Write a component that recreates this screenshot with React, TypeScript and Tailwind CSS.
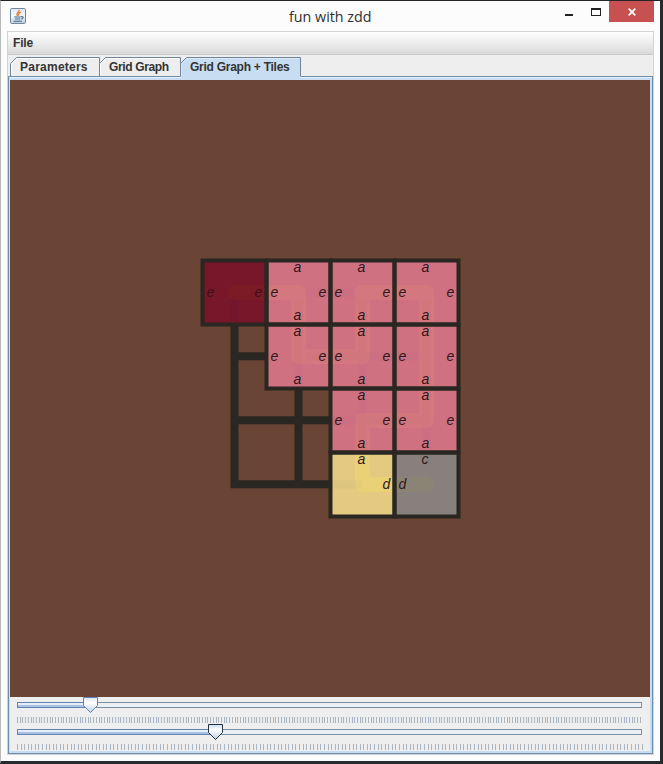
import React from "react";

type Tile = { col: number; row: number; fill: string; n?: string; w?: string; e?: string; s?: string };

const PINK = "#d07182";
const LINE = "#2a2621";

const pink = (col: number, row: number): Tile => ({ col, row, fill: PINK, n: "a", w: "e", e: "e", s: "a" });

const tiles: Tile[] = [
  { col: 0, row: 0, fill: "#781729", w: "e", e: "e" },
  pink(1, 0),
  pink(2, 0),
  pink(3, 0),
  pink(1, 1),
  pink(2, 1),
  pink(3, 1),
  pink(2, 2),
  pink(3, 2),
  { col: 2, row: 3, fill: "#e4ca80", n: "a", e: "d" },
  { col: 3, row: 3, fill: "#87807c", n: "c", w: "d" },
];

// Rounded bars of the tour; each one spans two neighbouring nodes.
const PINK_TOUR = "M266 292.5H298.5V356.5H362.5V292.5H426.5V420.5H362.5V452";

function Board() {
  return (
    <svg
      width="640"
      height="617"
      viewBox="10 80 640 617"
      className="block font-['Liberation_Sans',Arial,sans-serif] text-[14px] italic"
    >
      <path d="M234.5 292V488M298.5 292V484M231 356.2H426M231 420.2H426M230.5 484.2H362" stroke={LINE} strokeWidth="8" fill="none" />
      {tiles.map((t) => (
        <rect key={`${t.col}-${t.row}`} x={202.5 + t.col * 64} y={260.5 + t.row * 64} width="64" height="64" fill={t.fill} />
      ))}
      <path
        d="M298.5 300V386M362.5 300V452M426.5 300V452M306 292.5H354M306 356.5H422M332 420.5H422"
        stroke="#b8558a"
        strokeOpacity="0.08"
        strokeWidth="8"
        fill="none"
      />
      <path d="M234.5 298V322" stroke="#6a1434" strokeOpacity="0.4" strokeWidth="8" fill="none" />
      <path d="M332 484.5H362M426.5 455V484" stroke="#8a7c70" strokeOpacity="0.07" strokeWidth="8" fill="none" />
      <path d="M266.5 285H234.5a7.5 7.5 0 0 0 0 15H266.5Z" fill="#8a2820" fillOpacity="0.28" />
      <path d={PINK_TOUR} stroke="#ee9a68" strokeOpacity="0.16" strokeWidth="15" strokeLinejoin="round" fill="none" />
      <path d="M362.5 453V484.5H394" stroke="#f6dc66" strokeOpacity="0.34" strokeWidth="15" strokeLinejoin="round" fill="none" />
      <path d="M396 477H426.5a7.5 7.5 0 0 1 0 15H396Z" fill="#948a68" fillOpacity="0.32" />
      {tiles.map((t) => {
        const x = 202.5 + t.col * 64;
        const y = 260.5 + t.row * 64;
        const ink = t.col === 0 ? "#3f1018" : "#30171b";
        return (
          <g key={`${t.col}-${t.row}`} fill={ink}>
            <rect x={x} y={y} width="64" height="64" fill="none" stroke={LINE} strokeWidth="4" />
            {t.n && <text x={x + 27} y={y + 11.5}>{t.n}</text>}
            {t.w && <text x={x + 4} y={y + 36.5}>{t.w}</text>}
            {t.e && <text x={x + 52} y={y + 36.5}>{t.e}</text>}
            {t.s && <text x={x + 27} y={y + 59.5}>{t.s}</text>}
          </g>
        );
      })}
    </svg>
  );
}

function JavaIcon() {
  return (
    <svg width="16" height="16" viewBox="0 0 16 16" fill="none">
      <defs>
        <linearGradient id="cup" x1="0" y1="0" x2="0" y2="1">
          <stop offset="0" stopColor="#dfe7ee" />
          <stop offset="0.5" stopColor="#f4f7fa" />
          <stop offset="1" stopColor="#b9cbdc" />
        </linearGradient>
      </defs>
      <rect x="0.5" y="0.5" width="15" height="15" rx="1.2" fill="url(#cup)" stroke="#70879c" />
      <path d="M9.2 2C9.6 4.2 5.2 4.6 7.6 8M10.8 4.2C8.6 5 8.2 6 9 7.8" stroke="#e27b3c" strokeWidth="1.3" />
      <path d="M4.2 9h6.6M5 11h5.2M3.6 13.2h8.4M11 8.8c3-.8 2.6 2 .2 2.2" stroke="#416a91" strokeWidth="1.1" />
    </svg>
  );
}

function Tab({ label, width, tracking, active }: { label: string; width: number; tracking: string; active?: boolean }) {
  const h = active ? 23 : 19;
  return (
    <div className={`relative h-[19px] ${active ? "z-10" : ""}`} style={{ width }}>
      <svg width={width + 1} height={h} className="absolute left-0 top-0 overflow-visible">
        <path d={`M.5 ${h}V6.5L6.5 .5H${width + 0.5}V${h}Z`} fill={active ? "#c8ddf2" : "#eeeeee"} />
        <path d={`M.5 19V6.5L6.5 .5H${width + 0.5}V19`} fill="none" stroke="#708498" />
        <path d={`M1.5 18V7L7 1.5H${width - 1}`} fill="none" stroke={active ? "#dceafa" : "#ffffff"} />
      </svg>
      <span className={`absolute left-[10px] top-[2px] whitespace-nowrap text-[12px] font-bold leading-[16px] text-[#333333] ${tracking}`}>
        {label}
      </span>
    </div>
  );
}

function Slider({ value, pitch, focused }: { value: number; pitch: number; focused?: boolean }) {
  const count = Math.floor(625 / pitch) + 1;
  const id = focused ? "thumb-dark" : "thumb-blue";
  return (
    <svg width="640" height="27" className="block overflow-visible" shapeRendering="crispEdges">
      <defs>
        <linearGradient id={id} x1="0" y1="0" x2="0" y2="1">
          <stop offset="0" stopColor={focused ? "#c8ddf2" : "#dbe7f5"} />
          <stop offset="0.35" stopColor="#ffffff" />
          <stop offset="1" stopColor="#b8cfe5" />
        </linearGradient>
      </defs>
      <rect x="7.5" y="5.5" width="624" height="5" fill="#eaf0f5" stroke="#7b8fa3" />
      <rect x="7.5" y="5.5" width={value - 7} height="5" fill="#a9c1e2" stroke="#6583af" />
      <rect x="8" y="6" width={value - 8} height="2" fill="#e4edf8" />
      {Array.from({ length: count }, (_, i) => (
        <rect key={i} x={7 + Math.round(i * pitch)} y="20" width="1" height="6" fill="#aab6c2" />
      ))}
      <path
        d={`M${value - 6.5} .5H${value + 7.5}V8.5L${value + 0.5} 15.5L${value - 6.5} 8.5Z`}
        fill={`url(#${id})`}
        stroke={focused ? "#26303a" : "#6583af"}
        shapeRendering="geometricPrecision"
      />
    </svg>
  );
}

export default function App() {
  return (
    <div className="flex h-[764px] w-[663px] flex-col overflow-hidden border-b-[3px] border-l border-r-[3px] border-t border-b-[#272a2d] border-l-[#b9b9b9] border-r-[#272a2d] border-t-[#272427] bg-[#fcfcfc] font-['Liberation_Sans',Arial,sans-serif]">
      <header className="flex h-[30px] shrink-0 items-start pl-[9px] pr-[6px]">
        <div className="mt-[7px]">
          <JavaIcon />
        </div>
        <h1 className="ml-[204px] w-[300px] whitespace-nowrap pl-[59px] pt-[6px] font-['Open_Sans','Noto_Sans',sans-serif] text-[14.3px] leading-[20px] text-[#303030]">
          fun with zdd
        </h1>
        <div className="ml-auto flex h-[21px]">
          <div className="mr-[18px] mt-[13px] h-[2px] w-[8px] bg-[#222222]" />
          <div className="mr-[8px] mt-[7px] h-[8px] w-[10px] border border-t-2 border-[#222222]" />
          <div className="flex h-[21px] w-[45px] items-center justify-center bg-[#c75050]">
            <svg width="8" height="8" viewBox="0 0 8 8">
              <path d="M.7.7l6.6 6.6M7.3.7L.7 7.3" stroke="#fff" strokeWidth="1.7" />
            </svg>
          </div>
        </div>
      </header>
      <main className="ml-[6px] flex h-[724px] w-[647px] flex-col border border-[#d2d3d5] bg-[#eeeeee]">
        <nav className="h-[23px] shrink-0 border-b border-[#c9c9c9] bg-linear-to-b from-white to-[#dadada] pl-[5px] text-[12px] font-bold leading-[23px] tracking-[-0.15px] text-[#333333]">
          File
        </nav>
        <div className="mt-[2px] flex h-[19px] shrink-0 pl-[2px]">
          <Tab label="Parameters" width={89} tracking="tracking-[0.24px]" />
          <Tab label="Grid Graph" width={81} tracking="tracking-[-0.36px]" />
          <Tab label="Grid Graph + Tiles" width={120} tracking="tracking-[-0.26px]" active />
        </div>
        <section className="flex h-[678px] w-[645px] shrink-0 flex-col border border-[#6d8dac] bg-[#c8ddf2]">
          <div className="mb-[2px] h-px shrink-0 bg-[#e9f2fb]" />
          <div className="ml-px h-[617px] w-[640px] shrink-0 bg-[#6a4434]">
            <Board />
          </div>
          <div className="ml-px h-[54px] w-[640px] shrink-0 bg-[#eeeeee]">
            <Slider value={80} pitch={2.72} />
            <Slider value={205} pitch={3.57} focused />
          </div>
        </section>
      </main>
    </div>
  );
}
